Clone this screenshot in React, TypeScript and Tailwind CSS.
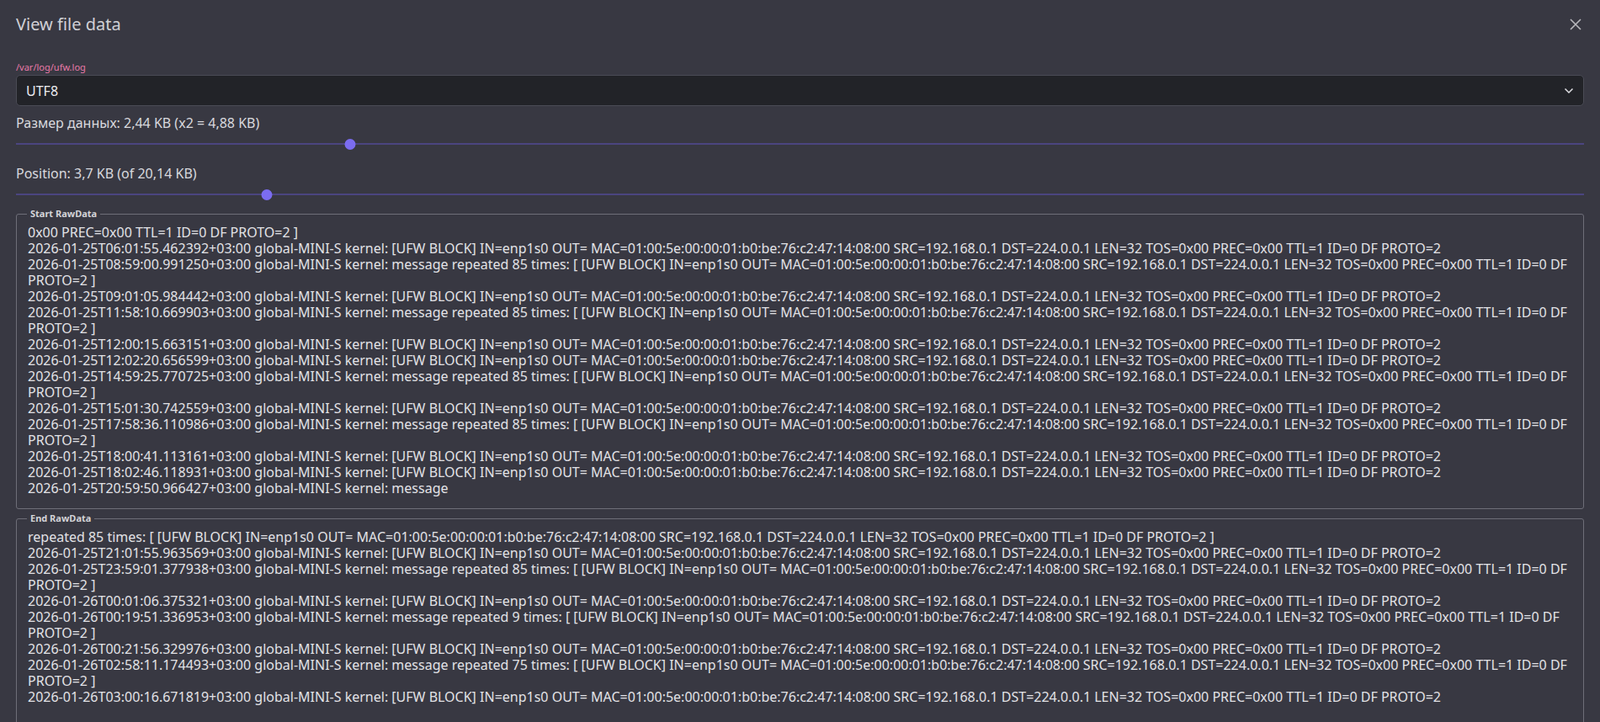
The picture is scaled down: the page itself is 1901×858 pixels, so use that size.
import React from "react";

const P = "IN=enp1s0 OUT= MAC=01:00:5e:00:00:01:b0:be:76:c2:47:14:08:00 SRC=192.168.0.1 DST=224.0.0.1 LEN=32 TOS=0x00 PREC=0x00 TTL=1 ID=0 DF PROTO=2";
const K = " global-MINI-S kernel: ";
const blk = (t: string) => t + K + "[UFW BLOCK] " + P;
const rep = (t: string, n: number) => t + K + `message repeated ${n} times: [ [UFW BLOCK] ` + P + " ]";

const start = [
  "0x00 PREC=0x00 TTL=1 ID=0 DF PROTO=2 ]",
  blk("2026-01-25T06:01:55.462392+03:00"),
  rep("2026-01-25T08:59:00.991250+03:00", 85),
  blk("2026-01-25T09:01:05.984442+03:00"),
  rep("2026-01-25T11:58:10.669903+03:00", 85),
  blk("2026-01-25T12:00:15.663151+03:00"),
  blk("2026-01-25T12:02:20.656599+03:00"),
  rep("2026-01-25T14:59:25.770725+03:00", 85),
  blk("2026-01-25T15:01:30.742559+03:00"),
  rep("2026-01-25T17:58:36.110986+03:00", 85),
  blk("2026-01-25T18:00:41.113161+03:00"),
  blk("2026-01-25T18:02:46.118931+03:00"),
  "2026-01-25T20:59:50.966427+03:00" + K + "message",
];
const end = [
  "repeated 85 times: [ [UFW BLOCK] " + P + " ]",
  blk("2026-01-25T21:01:55.963569+03:00"),
  rep("2026-01-25T23:59:01.377938+03:00", 85),
  blk("2026-01-26T00:01:06.375321+03:00"),
  rep("2026-01-26T00:19:51.336953+03:00", 9),
  blk("2026-01-26T00:21:56.329976+03:00"),
  rep("2026-01-26T02:58:11.174493+03:00", 75),
  blk("2026-01-26T03:00:16.671819+03:00"),
];

function Slider({ pct }: { pct: number }) {
  return (
    <div className="relative h-[14px] flex items-center">
      <div className="h-[2px] w-full bg-[#4b4580]" />
      <div className="absolute w-[13px] h-[13px] rounded-full bg-[#7b6cf0] -translate-x-1/2" style={{ left: `${pct}%` }} />
    </div>
  );
}

function Box({ title, lines, h }: { title: string; lines: string[]; h: string }) {
  return (
    <fieldset className={`border border-[#6e6e78] rounded-[3px] px-[13px] pt-[4px] ${h} overflow-hidden`}>
      <legend className="px-[4px] ml-[-1px] text-[11px] font-bold text-[#d4d4d8]">{title}</legend>
      <div className="text-[16px] leading-[19px] text-[#e2e2e6]">
        {lines.map((l, i) => <div key={i}>{l}</div>)}
      </div>
    </fieldset>
  );
}

export default function App() {
  return (
    <div className="min-h-[858px] bg-[#383842] px-[19px] pt-[14px] font-['Liberation_Sans'] text-[#d9d9de]">
      <div className="flex items-center justify-between">
        <h1 className="text-[20px] text-[#d0d0d5]">View file data</h1>
        <svg width="16" height="16" viewBox="0 0 16 16" className="mr-[2px]"><path d="M2 2 L14 14 M14 2 L2 14" stroke="#b8b8bd" strokeWidth="1.6" /></svg>
      </div>
      <div className="mt-[29px] text-[11px] leading-[14px] text-[#e879a8] font-['Liberation_Mono']">/var/log/ufw.log</div>
      <div className="mt-[2px] h-[37px] rounded-[5px] border border-[#4a4b55] bg-[#222328] flex items-center justify-between px-[11px]">
        <span className="text-[16px] text-[#ececf0]">UTF8</span>
        <svg width="12" height="8" viewBox="0 0 12 8"><path d="M1.5 1.5 L6 6 L10.5 1.5" stroke="#e0e0e4" strokeWidth="1.5" fill="none" /></svg>
      </div>
      <div className="mt-[11px] text-[16px] leading-[19px]">Размер данных: 2,44 KB (x2 = 4,88 KB)</div>
      <div className="mt-[8px]"><Slider pct={21.3} /></div>
      <div className="mt-[19px] text-[16px] leading-[19px]">Position: 3,7 KB (of 20,14 KB)</div>
      <div className="mt-[8px]"><Slider pct={16} /></div>
      <div className="mt-[8px]"><Box title="Start RawData" lines={start} h="h-[359px]" /></div>
      <div className="mt-[3px]"><Box title="End RawData" lines={end} h="h-[300px]" /></div>
    </div>
  );
}
